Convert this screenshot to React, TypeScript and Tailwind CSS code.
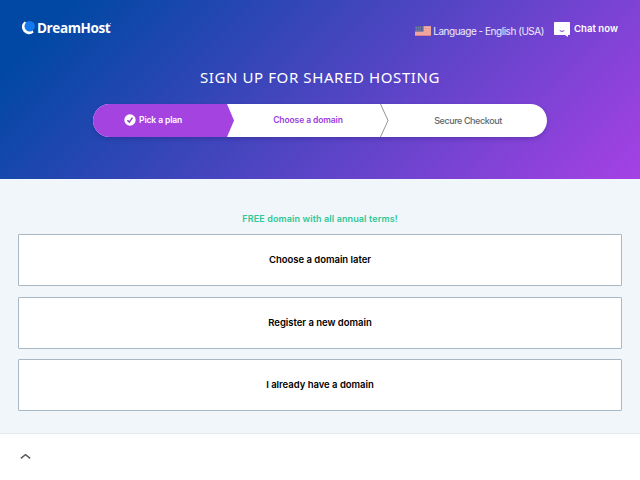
import type { ReactNode } from "react";

const sans = "font-['Inter','Liberation_Sans',sans-serif]";

function Logo() {
  return (
    <div className="flex h-[16px] items-center">
      <svg width="14" height="14" viewBox="0 0 14 14" className="shrink-0">
        <path d="M3.600.4A7 7 0 1 0 12.600 11.600L11 8 6 2Z" fill="#fff" />
        <circle cx="8.700" cy="5.200" r="5.200" fill="#1478ee" />
      </svg>
      <span className="ml-[2px] whitespace-nowrap font-['Open_Sans',sans-serif] text-[13.500px] font-bold leading-[14px] tracking-[-0.4px] text-white">
        DreamHost
      </span>
      <span className="mb-[9px] h-px w-px bg-white/60" />
    </div>
  );
}

function Flag() {
  return (
    <svg width="16" height="10" viewBox="0 0 16 10" className="shrink-0">
      <rect width="16" height="10" fill="#e99a96" />
      <path d="M0 1.6h16M0 3.8h16M0 6h16M0 8.2h16" stroke="#f2b9b0" strokeWidth=".8" />
      <path d="M0 9.6h16" stroke="#d66f82" strokeWidth=".8" />
      <rect width="8.500" height="5.6" fill="#586398" />
      <path d="M1 1.5h6M1 3h6M1 4.5h6" stroke="#8990b5" strokeWidth=".6" strokeDasharray="1 1" />
    </svg>
  );
}

function ChatIcon() {
  return (
    <svg width="16" height="15" viewBox="0 0 16 15" className="shrink-0">
      <path d="M.8 0h14.4q.8 0 .8.8v11.4q0 .8-.8.8H14v2L11 13H.8Q0 13 0 12.200V.8Q0 0 .8 0Z" fill="#fff" />
      <path d="M5.700 8.500q2.300 2 4.600 0" fill="none" stroke="#7547cb" strokeWidth="1" />
    </svg>
  );
}

function Steps() {
  return (
    <div className="mx-auto flex h-[33px] w-[454px] overflow-hidden rounded-full bg-white shadow-[0_2px_4px_rgba(30,20,100,0.25)]">
      <div className="flex w-[141px] items-center bg-[#a543e1] pl-[31px] [clip-path:polygon(0_0,134px_0,100%_50%,134px_100%,0_100%)]">
        <svg width="12" height="12" viewBox="0 0 12 12" className="-mt-px shrink-0">
          <circle cx="6" cy="6" r="5.700" fill="#fff" />
          <path d="M3.400 6.200 5.300 8.100 8.500 3.600" fill="none" stroke="#8844bd" strokeWidth="1.500" />
        </svg>
        <span className="ml-[3px] whitespace-nowrap text-[8.500px] font-semibold tracking-[-0.1px] text-white">Pick a plan</span>
      </div>
      <div className="flex w-[147px] items-center justify-center pl-px">
        <span className="whitespace-nowrap text-[8.500px] font-semibold tracking-[-0.1px] text-[#9b3ce0]">Choose a domain</span>
      </div>
      <svg width="9" height="33" viewBox="0 0 9 33" className="-ml-[1px] shrink-0">
        <path d="M.5 0 8 16.500.5 33" fill="none" stroke="#8f9499" strokeWidth="1" />
      </svg>
      <div className="flex flex-1 items-center justify-center">
        <span className="whitespace-nowrap text-[9px] font-medium tracking-[-0.42px] text-[#626669]">Secure Checkout</span>
      </div>
    </div>
  );
}

function Option({ children }: { children: ReactNode }) {
  return (
    <button className="flex h-[52px] w-full items-center justify-center rounded-[1px] border border-[#a9b8c5] bg-white text-[9.500px] font-semibold leading-none tracking-[-0.02px] text-black">
      {children}
    </button>
  );
}

export default function App() {
  return (
    <div className={`flex h-[480px] w-[640px] flex-col overflow-hidden bg-white ${sans}`}>
      <header className="h-[179px] shrink-0 bg-[linear-gradient(135deg,#0048a3_9%,#a441e4_99%)]">
        <div className="flex h-[60px] items-start justify-between pl-[21px] pr-[22px] pt-[20px]">
          <Logo />
          <div className="flex items-start">
            <div className="flex h-[12px] items-center pt-[10px]">
              <Flag />
              <span className="ml-[2px] whitespace-nowrap text-[10px] leading-[12px] tracking-[-0.47px] text-white/90">
                Language - English (USA)
              </span>
            </div>
            <div className="ml-[10px] mt-[2px] flex items-start">
              <ChatIcon />
              <span className="ml-[4px] whitespace-nowrap text-[9.500px] font-semibold leading-[14px] tracking-[0.08px] text-white">Chat now</span>
            </div>
          </div>
        </div>
        <h1 className="h-[44px] pt-[6px] text-center font-['Noto_Sans',sans-serif] text-[15px] leading-[22px] tracking-[0.6px] text-white">
          SIGN UP FOR SHARED HOSTING
        </h1>
        <Steps />
      </header>
      <main className="h-[255px] shrink-0 border-b border-[#e6e8ea] bg-[#f1f6fa] px-[18px] pt-[33px]">
        <p className="h-[22px] text-center text-[9px] font-semibold leading-[13px] tracking-[0.12px] text-[#2fc796]">
          FREE domain with all annual terms!
        </p>
        <div className="flex flex-col gap-[10.500px]">
          <Option>Choose a domain later</Option>
          <Option>Register a new domain</Option>
          <Option>I already have a domain</Option>
        </div>
      </main>
      <footer className="flex flex-1 items-start pl-[20px] pt-[19px]">
        <svg width="11" height="7" viewBox="0 0 11 7">
          <path d="M.8 5.400 5.500 1.700l4.700 3.700" fill="none" stroke="#55585b" strokeWidth="1.400" />
        </svg>
      </footer>
    </div>
  );
}
